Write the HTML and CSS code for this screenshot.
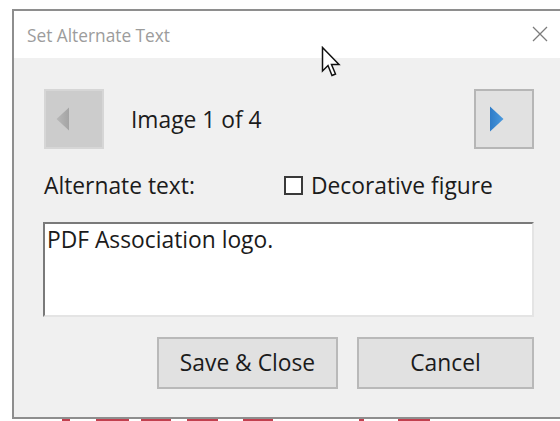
FILE: index.html
```html
<!DOCTYPE html>
<html lang="en">
<head>
<meta charset="utf-8">
<title>Set Alternate Text</title>
<link rel="stylesheet" href="styles.css">
</head>
<body>
<div class="page">
  <div class="dialog">
    <div class="titlebar">
      <span class="title">Set Alternate Text</span>
      <svg class="close" width="16" height="16" viewBox="0 0 16 16" aria-label="Close">
        <path d="M1 1 L15 15 M15 1 L1 15" stroke="#7c7c7c" stroke-width="1.3" fill="none"/>
      </svg>
    </div>
    <div class="content">
      <div class="nav-row">
        <span class="nav-btn nav-prev">
          <svg width="14" height="24" viewBox="0 0 14 24">
            <defs>
              <linearGradient id="gGray" x1="0" y1="0" x2="1" y2="0">
                <stop offset="0" stop-color="#b8b8b8"/>
                <stop offset="1" stop-color="#a4a4a4"/>
              </linearGradient>
            </defs>
            <path d="M13 0.5 L13 23.5 L0.5 12 Z" fill="url(#gGray)"/>
          </svg>
        </span>
        <span class="nav-label">Image 1 of 4</span>
        <span class="nav-btn nav-next">
          <svg width="15" height="26" viewBox="0 0 15 26">
            <defs>
              <linearGradient id="gBlue" x1="0" y1="0" x2="1" y2="0">
                <stop offset="0" stop-color="#2f7cc8"/>
                <stop offset="1" stop-color="#4b9ade"/>
              </linearGradient>
            </defs>
            <path d="M1 0.5 L1 25.5 L14.5 13 Z" fill="url(#gBlue)"/>
          </svg>
        </span>
      </div>
      <div class="fields-row">
        <span class="field-label">Alternate text:</span>
        <span class="check">
          <span class="check-box"></span>
          <span>Decorative figure</span>
        </span>
      </div>
      <div class="alt-text">PDF Association logo.</div>
      <div class="actions">
        <span class="btn btn-save">Save &amp; Close</span>
        <span class="btn btn-cancel">Cancel</span>
      </div>
    </div>
  </div>
  <div class="backdrop-strip">
    <span class="mark" style="margin-left:62px;width:8px"></span>
    <span class="mark" style="margin-left:26px;width:33px"></span>
    <span class="mark" style="margin-left:12px;width:30px"></span>
    <span class="mark" style="margin-left:16px;width:31px"></span>
    <span class="mark" style="margin-left:25px;width:30px"></span>
    <span class="mark" style="margin-left:86px;width:5px"></span>
    <span class="mark" style="margin-left:34px;width:32px"></span>
  </div>
  <svg class="cursor" width="20" height="32" viewBox="0 0 20 32">
    <path d="M1.5 1.5 L1.5 25 L7 19.5 L11 29.5 L14.5 28 L10.5 18.5 L18 18.5 Z" fill="#ffffff" stroke="#111111" stroke-width="1.5" stroke-linejoin="miter"/>
  </svg>
</div>
</body>
</html>
```

FILE: styles.css
```css
html, body {
  margin: 0;
  padding: 0;
  background: #ffffff;
}

body {
  width: 560px;
  height: 421px;
}

.page {
  position: relative;
  padding: 9px 0 0 12px;
  font-family: "Open Sans", "Noto Sans", sans-serif;
  color: #1b1b1b;
}

/* window frame runs off the right edge, so no right border */
.dialog {
  box-sizing: border-box;
  width: 548px;
  height: 410px;
  border-style: solid;
  border-color: #8e8e8e;
  border-width: 2px 0 2px 2px;
  display: flex;
  flex-direction: column;
  background: #f0f0f0;
}

.titlebar {
  height: 47px;
  flex: none;
  background: #ffffff;
  display: flex;
  align-items: center;
  padding-left: 13px;
}

.title {
  font-size: 17.3px;
  color: #9c9c9c;
  margin-top: 2px;
}

.close {
  margin-left: auto;
  margin-right: 12px;
  margin-top: -1px;
}

.content {
  padding: 31px 0 0 30px;
  width: 490px;
  display: flex;
  flex-direction: column;
  font-size: 22.8px;
  line-height: 30px;
}

.nav-row {
  display: flex;
  align-items: center;
  height: 60px;
}

.nav-btn {
  box-sizing: border-box;
  width: 60px;
  height: 60px;
  display: flex;
  align-items: center;
}

.nav-prev {
  background: #cccccc;
  border: 2px solid #d6d6d6;
  padding-left: 10px;
}

.nav-next {
  background: #e1e1e1;
  border: 2px solid #b6b6b6;
  margin-left: auto;
  padding-left: 13px;
}

.nav-label {
  margin-left: 27px;
  margin-top: 1px;
}

.fields-row {
  display: flex;
  align-items: center;
  margin-top: 22px;
  height: 30px;
}

.field-label {
  width: 240px;
}

.check {
  display: flex;
  align-items: center;
}

.check-box {
  box-sizing: border-box;
  width: 19px;
  height: 19px;
  background: #ffffff;
  border: 2px solid #3a3a3a;
  margin-right: 8px;
  margin-top: -2px;
}

.alt-text {
  box-sizing: border-box;
  margin: 21px 0 0 -1px;
  width: 491px;
  height: 95px;
  padding: 1px 2px;
  border-style: solid;
  border-width: 2px;
  border-color: #7a7a7a #e4e4e4 #e4e4e4 #7a7a7a;
  background: #ffffff;
}

.actions {
  display: flex;
  justify-content: flex-end;
  gap: 19px;
  margin-top: 20px;
}

.btn {
  box-sizing: border-box;
  height: 52px;
  display: flex;
  align-items: center;
  justify-content: center;
  background: #e1e1e1;
  border: 2px solid #b9b9b9;
}

.btn-save {
  width: 181px;
}

.btn-cancel {
  width: 177px;
}

.backdrop-strip {
  display: flex;
  height: 2px;
  margin-left: -12px;
}

.mark {
  display: block;
  height: 2px;
  background: #c2404f;
}

.cursor {
  position: absolute;
  left: 321px;
  top: 46px;
}
```
